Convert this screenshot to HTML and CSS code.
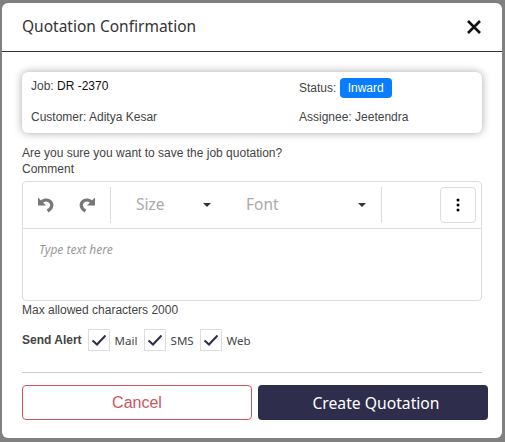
FILE: index.html
```html
<!DOCTYPE html>
<html lang="en">
<head>
    <meta charset="UTF-8">
    <title>Quotation Confirmation</title>
    <link rel="stylesheet" href="styles.css">
</head>
<body>
    <div class="modal">
        <div class="modal-header">
            <h1>Quotation Confirmation</h1>
            <svg class="close-icon" width="16" height="16" viewBox="0 0 16 16"><path d="M2 2L14 14M14 2L2 14" stroke="#111" stroke-width="2.6" fill="none"/></svg>
        </div>
        <div class="modal-body">
            <div class="job-card">
                <div class="job-row">
                    <div class="job-cell job-id">Job: <span class="dark">DR -2370</span></div>
                    <div class="job-cell">Status: <span class="badge">Inward</span></div>
                </div>
                <div class="job-row">
                    <div class="job-cell">Customer: Aditya Kesar</div>
                    <div class="job-cell">Assignee: Jeetendra</div>
                </div>
            </div>
            <p class="question">Are you sure you want to save the job quotation?</p>
            <p class="comment-label">Comment</p>
            <div class="editor">
                <div class="toolbar">
                    <div class="tool-group history">
                        <svg width="16" height="16" viewBox="0 0 16 16"><path fill="#777" d="M0 0.5V8.5H8Z"/><path d="M3 5.5C5.5 2.8 9 2.5 11.2 3.8C15 6 14.8 11 9.5 14" stroke="#777" stroke-width="3.2" fill="none"/></svg>
                        <svg width="16" height="16" viewBox="0 0 16 16"><path fill="#777" d="M16 0.5V8.5H8Z"/><path d="M13 5.5C10.5 2.8 7 2.5 4.8 3.8C1 6 1.2 11 6.5 14" stroke="#777" stroke-width="3.2" fill="none"/></svg>
                    </div>
                    <div class="tool-group selects">
                        <div class="select size-select"><span>Size</span><i class="caret"></i></div>
                        <div class="select font-select"><span>Font</span><i class="caret"></i></div>
                    </div>
                    <div class="tool-spacer"></div>
                    <button class="more-btn"><svg width="4" height="14" viewBox="0 0 4 14"><circle cx="2" cy="2" r="1.5"/><circle cx="2" cy="7" r="1.5"/><circle cx="2" cy="12" r="1.5"/></svg></button>
                </div>
                <div class="editor-area">Type text here</div>
            </div>
            <p class="hint">Max allowed characters 2000</p>
            <div class="alerts">
                <strong>Send Alert</strong>
                <label class="check"><span class="box"><svg width="16" height="12" viewBox="0 0 16 12"><path d="M1.5 6.5L6 10.5L14.5 1.5" stroke="#2f2d4c" stroke-width="2" fill="none"/></svg></span>Mail</label>
                <label class="check"><span class="box"><svg width="16" height="12" viewBox="0 0 16 12"><path d="M1.5 6.5L6 10.5L14.5 1.5" stroke="#2f2d4c" stroke-width="2" fill="none"/></svg></span>SMS</label>
                <label class="check"><span class="box"><svg width="16" height="12" viewBox="0 0 16 12"><path d="M1.5 6.5L6 10.5L14.5 1.5" stroke="#2f2d4c" stroke-width="2" fill="none"/></svg></span>Web</label>
            </div>
            <hr class="divider">
            <div class="actions">
                <button class="btn-cancel">Cancel</button>
                <button class="btn-create">Create Quotation</button>
            </div>
        </div>
    </div>
</body>
</html>
```
FILE: styles.css
```css
* {
    box-sizing: border-box;
}
html, body {
    height: 100%;
}
body {
    margin: 0;
    padding: 3px 3px 4px 2px;
    overflow: hidden;
    background-color: #808080;
    font-family: 'Liberation Sans', Arial, sans-serif;
    font-size: 12px;
    color: #444;
}
.modal {
    height: 435px;
    background-color: white;
    border-radius: 6px;
}
.modal-header {
    display: flex;
    justify-content: space-between;
    align-items: center;
    height: 49px;
    padding: 0 20px;
    border-bottom: 1px solid #34343f;
}
h1 {
    margin: 0 0 2px;
    font-family: 'Noto Sans', sans-serif;
    font-size: 15.5px;
    font-weight: 400;
    color: #333;
}
.modal-body {
    padding: 20px 14px 0 20px;
}
.job-card {
    width: 460px;
    height: 61px;
    padding: 6px 9px;
    border-radius: 6px;
    box-shadow: 0 0 8px rgba(0,0,0,0.35);
}
.job-row {
    display: flex;
    align-items: center;
}
.job-row + .job-row {
    margin-top: 9px;
}
.job-cell {
    height: 20px;
    line-height: 20px;
    white-space: nowrap;
}
.job-cell:first-child {
    width: 268px;
}
.job-id {
    align-self: flex-start;
    line-height: 16px;
}
.dark {
    color: #111;
}
.badge {
    display: inline-block;
    height: 20px;
    padding: 0 8px;
    border-radius: 4px;
    background-color: #0a7cff;
    color: white;
}
.question {
    margin: 13px 0 0;
    line-height: 15px;
}
.comment-label {
    margin: 1px 0 0;
    line-height: 15px;
}
.editor {
    width: 460px;
    height: 120px;
    margin-top: 4px;
    border: 1px solid #ddd;
    border-radius: 4px;
}
.toolbar {
    display: flex;
    align-items: center;
    height: 47px;
    padding: 5px 5px 5px 0;
    border-bottom: 1px solid #ddd;
}
.tool-group {
    display: flex;
    align-items: center;
    height: 36px;
    border-right: 1px solid #ddd;
}
.history {
    width: 88px;
    padding-left: 15px;
    gap: 25px;
}
.selects {
    width: 271px;
    padding-bottom: 2px;
    font-family: 'Noto Sans', sans-serif;
    font-size: 15.5px;
    color: #aaa;
}
.select {
    display: flex;
    align-items: center;
    justify-content: space-between;
}
.size-select {
    width: 100px;
    padding-left: 25px;
}
.font-select {
    width: 155px;
    padding-left: 35px;
}
.caret {
    width: 0;
    height: 0;
    margin-top: 2px;
    border-left: 4px solid transparent;
    border-right: 4px solid transparent;
    border-top: 4px solid #333;
}
.tool-spacer {
    flex: 1;
}
.more-btn {
    display: flex;
    align-items: center;
    justify-content: center;
    width: 36px;
    height: 36px;
    padding: 0;
    background-color: white;
    border: 1px solid #ddd;
    border-radius: 4px;
}
.editor-area {
    padding: 12px 16px;
    font-family: 'Noto Sans', sans-serif;
    font-size: 12px;
    font-style: italic;
    color: #999;
}
.hint {
    margin: 2px 0 0;
    line-height: 15px;
}
.alerts {
    display: flex;
    align-items: center;
    height: 22px;
    margin-top: 11px;
}
.alerts strong {
    margin-right: 6px;
}
.check {
    display: flex;
    align-items: center;
    width: 56px;
    font-family: 'Noto Sans', sans-serif;
    font-size: 11.5px;
}
.box {
    display: flex;
    align-items: center;
    justify-content: center;
    width: 22px;
    height: 22px;
    margin-right: 5px;
    border: 1px solid #ddd;
}
.divider {
    width: 460px;
    margin: 21px 0 12px;
    border: 0;
    border-top: 1px solid #ccc;
}
.actions {
    display: flex;
    gap: 6px;
}
.actions button {
    width: 230px;
    height: 35px;
    border-radius: 4px;
}
.btn-cancel {
    background-color: white;
    border: 1px solid #cf5560;
    color: #cf5560;
    font-family: 'Liberation Sans', sans-serif;
    font-size: 16px;
}
.btn-create {
    padding: 0 0 0 6px;
    background-color: #2f2d4c;
    border: none;
    color: white;
    font-family: 'Noto Sans', sans-serif;
    font-size: 15.7px;
}
```
